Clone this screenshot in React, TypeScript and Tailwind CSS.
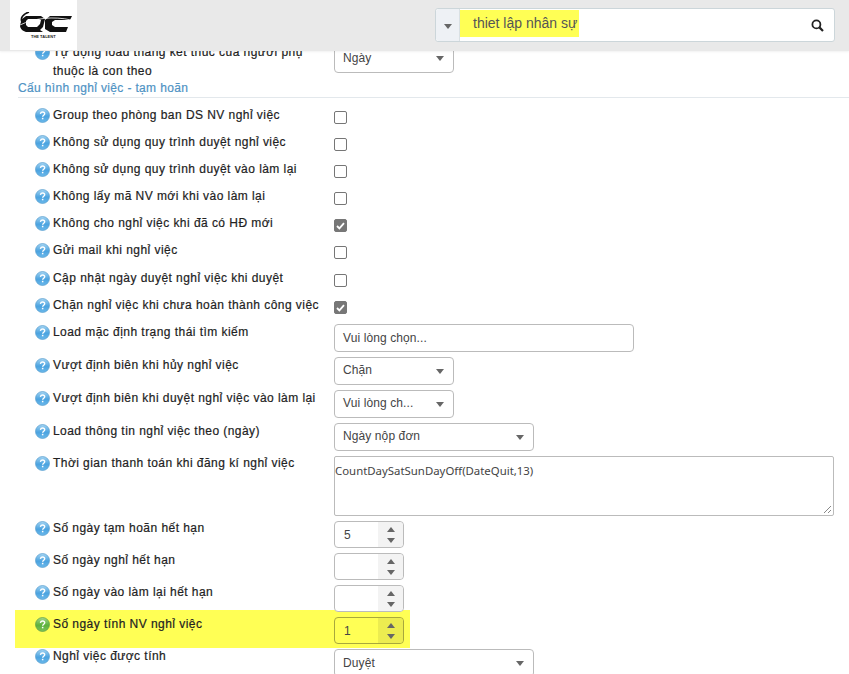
import React from 'react';

function HelpIcon({ green = false }: { green?: boolean }) {
  const id = green ? 'help-green' : 'help-blue';
  return (
    <svg width="15" height="15" viewBox="0 0 15 15" className="mt-[2px] shrink-0">
      <defs>
        <linearGradient id={id} x1="0" y1="0" x2="0" y2="1">
          <stop offset="0" stopColor={green ? '#a5d88a' : '#a5d5f3'} />
          <stop offset="0.55" stopColor={green ? '#5cb13c' : '#4ba3e0'} />
          <stop offset="1" stopColor={green ? '#7cc35c' : '#6ab8ea'} />
        </linearGradient>
      </defs>
      <circle cx="7.5" cy="7.5" r="7" fill={`url(#${id})`} stroke={green ? '#5f9e45' : '#5a9fcf'} strokeWidth="0.7" />
      <path d="M5.4 5.8c.2-1.2 1.1-1.8 2.2-1.8 1.2 0 2.1.7 2.1 1.8 0 1.5-2 1.5-2 3" fill="none" stroke="#fff" strokeWidth="1.4" />
      <rect x="6.9" y="9.8" width="1.5" height="1.5" fill="#fff" />
    </svg>
  );
}

function Label({ children, green = false }: { children: React.ReactNode; green?: boolean }) {
  return (
    <div className="flex w-[299px] shrink-0 items-start gap-[3px] pr-[12px]">
      <HelpIcon green={green} />
      <span className="text-[12px] leading-[19px] tracking-[0.45px] text-[#222] [-webkit-text-stroke:0.2px_#222]">{children}</span>
    </div>
  );
}

function Caret({ className = '' }: { className?: string }) {
  return <span className={`h-0 w-0 border-x-[4px] border-t-[5px] border-x-transparent border-t-[#666] ${className}`} />;
}

function Check({ checked = false }: { checked?: boolean }) {
  return (
    <span className={`mt-[5px] flex h-[13px] w-[13px] items-center justify-center rounded-[2px] border ${checked ? 'border-[#777] bg-[#777]' : 'border-[#767676] bg-white'}`}>
      {checked && (
        <svg width="9" height="8" viewBox="0 0 9 8">
          <path d="M1 4l2.4 2.4L8 1.2" fill="none" stroke="#fff" strokeWidth="1.8" />
        </svg>
      )}
    </span>
  );
}

function CheckRow({ label, checked = false, height }: { label: string; checked?: boolean; height: string }) {
  return (
    <div className={`flex pl-[35px] pt-[1px] ${height}`}>
      <Label>{label}</Label>
      <Check checked={checked} />
    </div>
  );
}

function Select({ value, width, raised = false }: { value: string; width: string; raised?: boolean }) {
  return (
    <div className={`flex h-[28px] items-center justify-between rounded-[4px] border border-[#bbb] bg-white pl-[8px] pr-[9px] text-[12px] text-[#444] ${width}`}>
      <span className={`tracking-[0.1px] ${raised ? '-mt-[2px]' : ''}`}>{value}</span>
      <Caret />
    </div>
  );
}

function Spinner({ value = '', active = false }: { value?: string; active?: boolean }) {
  return (
    <div className={`relative flex h-[27px] w-[70px] items-center justify-between rounded-[4px] border ${active ? 'border-[#a8a83c]' : 'border-[#bbb] bg-white'} text-[12px] text-[#444]`}>
      <span className="pl-[9px]">{value}</span>
      <div className={`flex h-full w-[25px] flex-col items-center justify-center gap-[6px] rounded-r-[4px] ${active ? 'bg-[#ecec50]' : 'bg-[#f3f3f3]'}`}>
        <span className="h-0 w-0 border-x-[4px] border-b-[5px] border-x-transparent border-b-[#666]" />
        <Caret />
      </div>
    </div>
  );
}

export default function App() {
  const firstRows = [
    { label: 'Group theo phòng ban DS NV nghỉ việc', height: 'h-[27px]' },
    { label: 'Không sử dụng quy trình duyệt nghỉ việc', height: 'h-[27px]' },
    { label: 'Không sử dụng quy trình duyệt vào làm lại', height: 'h-[27px]' },
    { label: 'Không lấy mã NV mới khi vào làm lại', height: 'h-[27px]' },
    { label: 'Không cho nghỉ việc khi đã có HĐ mới', checked: true, height: 'h-[27px]' },
    { label: 'Gửi mail khi nghỉ việc', height: 'h-[28px]' },
    { label: 'Cập nhật ngày duyệt nghỉ việc khi duyệt', height: 'h-[27px]' },
    { label: 'Chặn nghỉ việc khi chưa hoàn thành công việc', checked: true, height: 'h-[26px]' },
  ];

  return (
    <div className="relative h-[674px] w-[849px] overflow-hidden bg-white font-['Liberation_Sans',Arial,sans-serif]">
      <header className="absolute inset-x-0 top-0 z-10 flex h-[51px] items-start bg-[#e9e9e9] pl-[10px] pr-[14px] shadow-[0_1px_2px_rgba(0,0,0,0.06)]">
        <div className="flex h-[50px] w-[67px] flex-col bg-white pl-[8px] pt-[12px]">
          <svg width="54" height="21" viewBox="0 0 54 21">
            <path d="M11 0C5 2 2 6 4 10" fill="none" stroke="#111" strokeWidth="1.6" />
            <path d="M8 4h15l4 3-2 8-3 3 3 2H8c-3-1-6-3-6-7l2-6zm2 3-2 2 0 4 2 2h9l3-3 1-4-2-1z" fill="#111" fillRule="evenodd" />
            <path d="M32 4h22l-2 4H37l-3 2 0 3 3 2h13l-2 5H32l-5-3 0-9z" fill="#111" />
            <path d="M2 13C16 6 36 4 53 8" fill="none" stroke="#fff" strokeWidth="0.8" />
          </svg>
          <span className="ml-[13px] mt-[1px] text-[4px] font-bold leading-[5px] text-[#222]">THE TALENT</span>
        </div>
        <div className="ml-auto mt-[8px] flex h-[34px] w-[400px] items-stretch rounded-[3px] border border-[#ccd6da] bg-white">
          <div className="flex w-[24px] items-center justify-center rounded-l-[3px] border-r border-[#d9e0e3] bg-[#eef1f5] pt-[2px]">
            <Caret />
          </div>
          <div className="mt-[1px] flex h-[27px] items-center bg-[#ffff55] pl-[13px] pr-[2px] text-[14px] text-[#555]">thiet lập nhân sự</div>
          <div className="ml-auto flex items-center pr-[10px]">
            <svg width="13" height="13" viewBox="0 0 13 13">
              <circle cx="5.4" cy="5.4" r="4" fill="none" stroke="#222" strokeWidth="1.8" />
              <path d="M8.4 8.4l3.6 3.6" stroke="#222" strokeWidth="2.2" />
            </svg>
          </div>
        </div>
      </header>

      <main className="flex flex-col pt-[42px]">
        <div className="flex h-[38px] pl-[35px]">
          <div className="pt-[1px]">
            <Label>Tự động load tháng kết thúc của người phụ thuộc là con theo</Label>
          </div>
          <div className="pt-[1px]">
            <Select value="Ngày" width="w-[120px] !h-[30px]" />
          </div>
        </div>

        <h3 className="ml-[18px] h-[18px] border-b border-[#e3e8ec] text-[12px] leading-[16px] tracking-[0.35px] text-[#4f93c4] [-webkit-text-stroke:0.2px_#4f93c4]">
          Cấu hình nghỉ việc - tạm hoãn
        </h3>

        <div className="flex flex-col pt-[7px]">
          {firstRows.map((row) => (
            <CheckRow key={row.label} label={row.label} checked={row.checked} height={row.height} />
          ))}
        </div>

        <div className="flex h-[33px] pl-[35px] pt-[2px]">
          <Label>Load mặc định trạng thái tìm kiếm</Label>
          <div className="mt-[1px] flex h-[28px] w-[300px] items-center rounded-[4px] border border-[#bbb] pl-[8px] text-[12px] tracking-[0.1px] text-[#444]">Vui lòng chọn...</div>
        </div>
        <div className="flex h-[33px] pl-[35px] pt-[2px]">
          <Label>Vượt định biên khi hủy nghỉ việc</Label>
          <div className="mt-[1px]"><Select value="Chặn" width="w-[120px]" raised /></div>
        </div>
        <div className="flex h-[33px] pl-[35px] pt-[2px]">
          <Label>Vượt định biên khi duyệt nghỉ việc vào làm lại</Label>
          <div className="mt-[1px]"><Select value="Vui lòng ch..." width="w-[120px]" raised /></div>
        </div>
        <div className="flex h-[33px] pl-[35px] pt-[2px]">
          <Label>Load thông tin nghỉ việc theo (ngày)</Label>
          <div className="mt-[1px]"><Select value="Ngày nộp đơn" width="w-[200px]" raised /></div>
        </div>
        <div className="flex h-[65px] pl-[35px] pt-[1px]">
          <Label>Thời gian thanh toán khi đăng kí nghỉ việc</Label>
          <div className="relative mt-[2px] h-[60px] w-[500px] rounded-[2px] border border-[#bbb] pt-[5px] font-['Noto_Sans',sans-serif] text-[11.4px] text-[#444]">
            CountDaySatSunDayOff(DateQuit,13)
            <svg width="9" height="9" viewBox="0 0 9 9" className="absolute bottom-[1px] right-[1px]">
              <path d="M1 8l7-7M5 8l3-3" stroke="#888" strokeWidth="1" />
            </svg>
          </div>
        </div>
        <div className="flex h-[32px] pl-[35px] pt-[1px]">
          <Label>Số ngày tạm hoãn hết hạn</Label>
          <div className="mt-[2px]"><Spinner value="5" /></div>
        </div>
        <div className="flex h-[32px] pl-[35px] pt-[1px]">
          <Label>Số ngày nghỉ hết hạn</Label>
          <div className="mt-[2px]"><Spinner /></div>
        </div>
        <div className="flex h-[28px] pl-[35px] pt-[1px]">
          <Label>Số ngày vào làm lại hết hạn</Label>
          <div className="mt-[2px]"><Spinner /></div>
        </div>
        <div className="ml-[15px] flex h-[38px] w-[395px] bg-[#ffff55] pl-[20px] pt-[5px]">
          <Label green>Số ngày tính NV nghỉ việc</Label>
          <div className="mt-[2px]"><Spinner value="1" active /></div>
        </div>
        <div className="flex pl-[35px]">
          <div className="-mt-[1px]">
            <Label>Nghỉ việc được tính</Label>
          </div>
          <div className="mt-[1px]"><Select value="Duyệt" width="w-[200px]" /></div>
        </div>
      </main>
    </div>
  );
}
